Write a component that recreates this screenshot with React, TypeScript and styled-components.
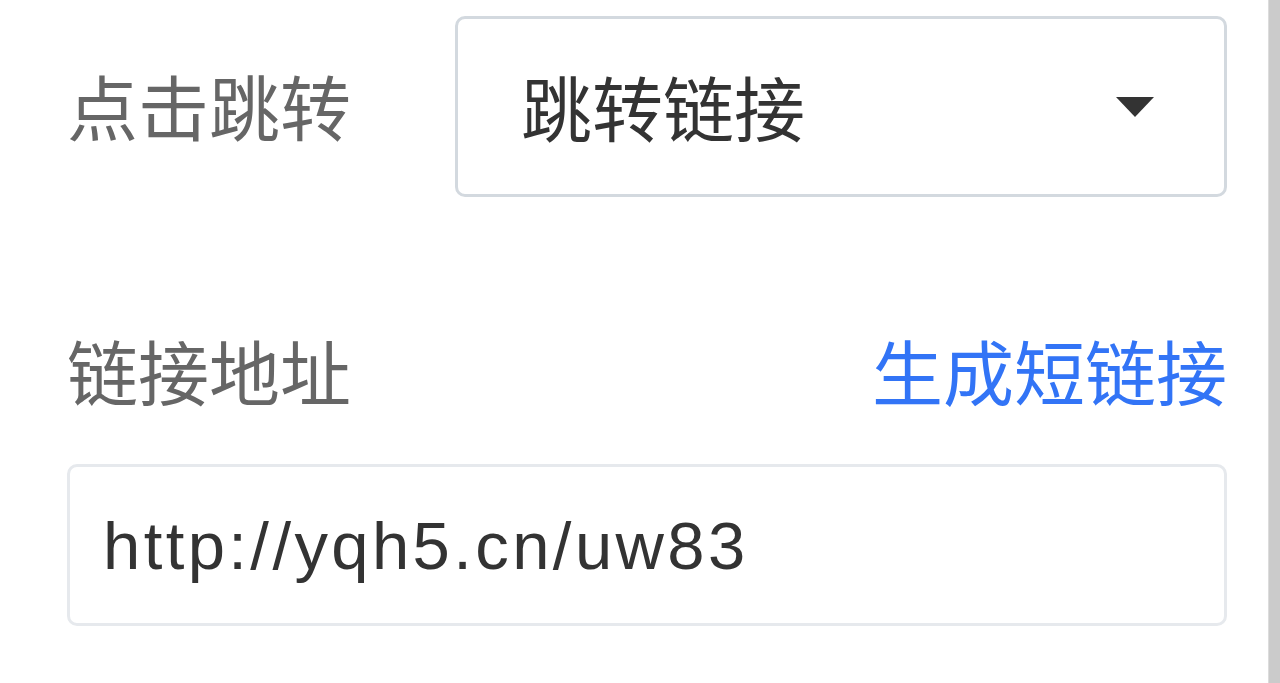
import React from "react"
import { styled, createGlobalStyle } from "styled-components"

const GlobalStyle = createGlobalStyle`
  html, body {
    margin: 0;
    padding: 0;
    background: #ffffff;
    font-family: "Liberation Sans", "Noto Sans CJK SC", sans-serif;
  }
`

const Page = styled.div`
  display: flex;
  height: 100vh;
  overflow: hidden;
`

const Content = styled.div`
  flex: 1;
  display: flex;
  flex-direction: column;
  padding: 16px 41px 0 67px;
`

const Gutter = styled.div`
  width: 11px;
  background: #cbcbcb;
  border-left: 1px solid #dcdcdc;
`

const FieldRow = styled.div`
  display: flex;
  align-items: center;
`

const Label = styled.div`
  width: 388px;
  font-size: 71px;
  line-height: 80px;
  padding-bottom: 6px;
  color: #666666;
  font-family: "Noto Sans CJK SC", sans-serif;
`

const Select = styled.div`
  flex: 1;
  height: 181px;
  box-sizing: border-box;
  display: flex;
  align-items: center;
  justify-content: space-between;
  padding: 0 70px 4px 63px;
  border: 3px solid #d3d9df;
  border-radius: 10px;
  font-size: 71px;
  color: #333333;
  font-family: "Noto Sans CJK SC", sans-serif;
`

const Caret = styled.span`
  width: 0;
  height: 0;
  margin-top: 4px;
  border-left: 19px solid transparent;
  border-right: 19px solid transparent;
  border-top: 20px solid #333333;
`

const HeaderRow = styled.div`
  display: flex;
  justify-content: space-between;
  align-items: center;
  margin-top: 132px;
  line-height: 80px;
`

const Action = styled.span`
  font-size: 71px;
  padding-bottom: 6px;
  color: #3274f6;
  font-family: "Noto Sans CJK SC", sans-serif;
  cursor: pointer;
`

const Input = styled.div`
  margin-top: 49px;
  height: 162px;
  box-sizing: border-box;
  display: flex;
  align-items: center;
  padding-left: 33px;
  border: 3px solid #e6e9ed;
  border-radius: 10px;
  font-size: 67px;
  letter-spacing: 3.4px;
  color: #333333;
  font-family: "Liberation Sans", Arial, sans-serif;
`

const App: React.FC = () => {
  return (
    <>
      <GlobalStyle />
      <Page>
        <Content>
          <FieldRow>
            <Label>点击跳转</Label>
            <Select>
              <span>跳转链接</span>
              <Caret />
            </Select>
          </FieldRow>

          <HeaderRow>
            <Label>链接地址</Label>
            <Action>生成短链接</Action>
          </HeaderRow>

          <Input>http://yqh5.cn/uw83</Input>
        </Content>
        <Gutter />
      </Page>
    </>
  )
}

export default App
